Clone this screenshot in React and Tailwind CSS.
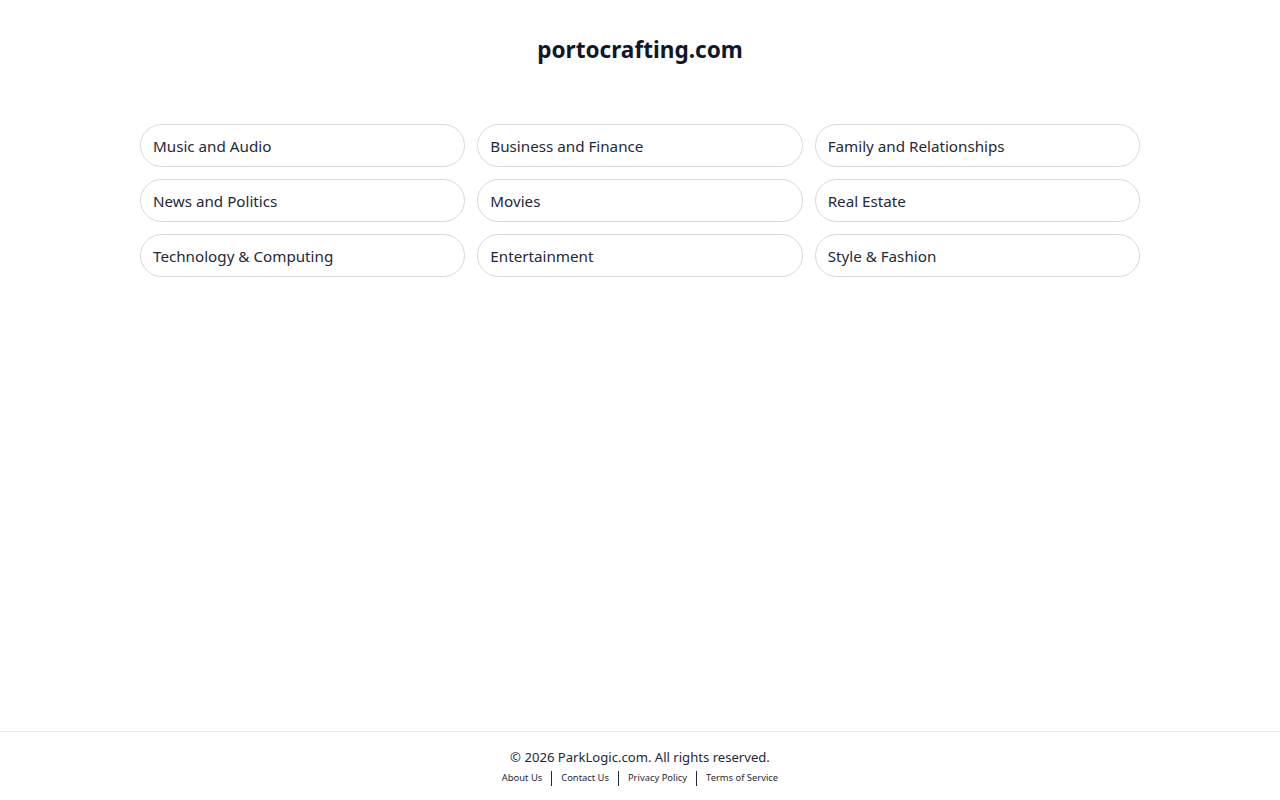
import React from "react";

const categories = [
  "Music and Audio",
  "Business and Finance",
  "Family and Relationships",
  "News and Politics",
  "Movies",
  "Real Estate",
  "Technology & Computing",
  "Entertainment",
  "Style & Fashion",
];

const links = ["About Us", "Contact Us", "Privacy Policy", "Terms of Service"];

export default function App() {
  return (
    <div
      className="min-h-screen flex flex-col bg-white text-[#111827]"
      style={{ fontFamily: '"Noto Sans", "Open Sans", sans-serif' }}
    >
      <main className="flex-1">
        <h1 className="pt-[33px] text-center text-[22.6px] leading-[34px] font-bold text-[#0f172a]">
          portocrafting.com
        </h1>

        {/* Category pills */}
        <div className="mx-auto mt-[57px] w-[1000px] grid grid-cols-3 gap-x-[12px] gap-y-[12px]">
          {categories.map((c) => (
            <a
              key={c}
              href="#"
              className="h-[43px] flex items-center px-[12px] pt-[2px] rounded-full border border-[#d9d9d9] text-[15.2px] text-[#1f2937]"
            >
              {c}
            </a>
          ))}
        </div>
      </main>

      <footer className="border-t border-[#e5e7eb] h-[69px] pt-[16px] text-center">
        <p className="text-[13.1px] leading-[18px] text-[#1f2937]">© 2026 ParkLogic.com. All rights reserved.</p>
        <div className="mt-[5px] flex justify-center items-center text-[9.4px] text-[#1f2937]">
          {links.map((l, i) => (
            <React.Fragment key={l}>
              {i > 0 && <span className="mx-[9px] w-px h-[15px] bg-[#1f2937]" />}
              <a href="#">{l}</a>
            </React.Fragment>
          ))}
        </div>
      </footer>
    </div>
  );
}
